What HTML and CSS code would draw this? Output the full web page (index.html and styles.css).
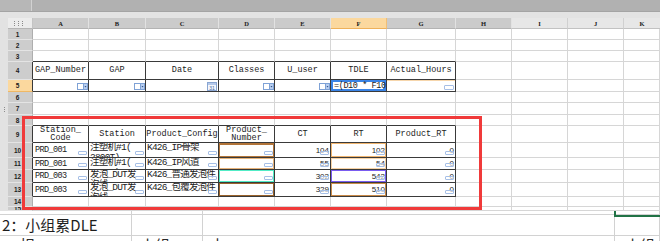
FILE: index.html
```
<!DOCTYPE html>
<html>
<head>
<meta charset="utf-8">
<link rel="stylesheet" href="styles.css">
</head>
<body>
<div class="screen">
  <div class="topbar"><div class="tb-name"></div><div class="tb-formula"></div></div>
  <div class="band"></div>
  <div class="main">
    <div class="strip"><span class="grip"></span></div>
    <div class="sheet">
      <div class="corner"><svg width="9" height="5" viewBox="0 0 9 5"><g fill="#8a8a8a"><rect x="0" y="0" width="1" height="1"/><rect x="0" y="2" width="1" height="1"/><rect x="0" y="4" width="1" height="1"/><rect x="4" y="0" width="1" height="1"/><rect x="4" y="2" width="1" height="1"/><rect x="4" y="4" width="1" height="1"/><rect x="8" y="0" width="1" height="1"/><rect x="8" y="2" width="1" height="1"/><rect x="8" y="4" width="1" height="1"/></g></svg></div>
      <div class="ch">A</div><div class="ch">B</div><div class="ch">C</div><div class="ch">D</div><div class="ch">E</div><div class="ch act">F</div><div class="ch">G</div><div class="ch">H</div><div class="ch u">I</div><div class="ch u">J</div><div class="ch u last">K</div>

      <div class="rh">1</div><div></div><div></div><div></div><div></div><div></div><div></div><div></div><div></div><div></div><div></div><div></div>
      <div class="rh">2</div><div></div><div></div><div></div><div></div><div></div><div></div><div></div><div></div><div></div><div></div><div></div>
      <div class="rh">3</div><div class="tb"></div><div class="tb"></div><div class="tb"></div><div class="tb"></div><div class="tb"></div><div class="tb"></div><div class="tb"></div><div></div><div></div><div></div><div></div>

      <div class="rh tl">4</div>
      <div class="t hd">GAP_Number</div><div class="t hd">GAP</div><div class="t hd">Date</div><div class="t hd">Classes</div><div class="t hd">U_user</div><div class="t hd">TDLE</div><div class="t hd">Actual_Hours</div>
      <div></div><div></div><div></div><div></div>

      <div class="rh act tl">5</div>
      <div class="t"><svg class="dd" width="11" height="7" viewBox="0 0 11 7"><rect x="0.5" y="0.5" width="6" height="6" fill="#fff" stroke="#7fa2d6"/><rect x="6.5" y="0.5" width="4" height="6" fill="#b9cff0" stroke="#7fa2d6"/><path d="M7.5 3h2l-1 1.5z" fill="#34548a"/></svg></div>
      <div class="t"><svg class="dd" width="11" height="7" viewBox="0 0 11 7"><rect x="0.5" y="0.5" width="6" height="6" fill="#fff" stroke="#7fa2d6"/><rect x="6.5" y="0.5" width="4" height="6" fill="#b9cff0" stroke="#7fa2d6"/><path d="M7.5 3h2l-1 1.5z" fill="#34548a"/></svg></div>
      <div class="t"><svg class="cal" width="10" height="9" viewBox="0 0 10 9"><rect x="0.5" y="0.5" width="9" height="8" fill="#f4f7fc" stroke="#8aa6d2"/><rect x="1" y="1" width="8" height="2" fill="#b5c9ea"/><text x="5" y="8" text-anchor="middle" font-family="Liberation Sans" font-size="5" fill="#4a6aa0">31</text></svg></div>
      <div class="t"><svg class="dd" width="11" height="7" viewBox="0 0 11 7"><rect x="0.5" y="0.5" width="6" height="6" fill="#fff" stroke="#7fa2d6"/><rect x="6.5" y="0.5" width="4" height="6" fill="#b9cff0" stroke="#7fa2d6"/><path d="M7.5 3h2l-1 1.5z" fill="#34548a"/></svg></div>
      <div class="t"><svg class="dd" width="11" height="7" viewBox="0 0 11 7"><rect x="0.5" y="0.5" width="6" height="6" fill="#fff" stroke="#7fa2d6"/><rect x="6.5" y="0.5" width="4" height="6" fill="#b9cff0" stroke="#7fa2d6"/><path d="M7.5 3h2l-1 1.5z" fill="#34548a"/></svg></div>
      <div class="t sel"><span class="formula">=(D10 * F10</span><span class="handle"></span></div>
      <div class="t g5"><span class="ic wide"></span></div>
      <div></div><div></div><div></div><div></div>

      <div class="rh">6</div><div></div><div></div><div></div><div></div><div></div><div></div><div></div><div></div><div></div><div></div><div></div>
      <div class="rh">7</div><div></div><div></div><div></div><div></div><div></div><div></div><div></div><div></div><div></div><div></div><div></div>
      <div class="rh">8</div><div class="tb"></div><div class="tb"></div><div class="tb"></div><div class="tb"></div><div class="tb"></div><div class="tb"></div><div class="tb"></div><div></div><div></div><div></div><div></div>

      <div class="rh tl">9</div>
      <div class="t hd">Station_<br>Code</div><div class="t hd">Station</div><div class="t hd">Product_Config</div><div class="t hd">Product_<br>Number</div><div class="t hd">CT</div><div class="t hd">RT</div><div class="t hd">Product_RT</div>
      <div></div><div></div><div></div><div></div>

      <div class="rh tl">10</div>
      <div class="t txt">PRD_001<span class="ic"></span></div>
      <div class="t cjk">注塑机#1(<br>2800T)<span class="ic"></span></div>
      <div class="t cjk">K426_IP骨架<span class="ic"></span></div>
      <div class="t hl h-brown"><span class="ic"></span></div>
      <div class="t num">104<span class="ic"></span></div>
      <div class="t num hl h-orange">102<span class="ic"></span></div>
      <div class="t num">0<span class="ic"></span></div>
      <div></div><div></div><div></div><div></div>

      <div class="rh tl">11</div>
      <div class="t txt">PRD_001<span class="ic"></span></div>
      <div class="t cjk">注塑机#1(<br>2800T)<span class="ic"></span></div>
      <div class="t cjk">K426_IP风道<span class="ic"></span></div>
      <div class="t hl h-tan"><span class="ic"></span></div>
      <div class="t num">55<span class="ic"></span></div>
      <div class="t num hl h-light">54<span class="ic"></span></div>
      <div class="t num">0<span class="ic"></span></div>
      <div></div><div></div><div></div><div></div>

      <div class="rh tl">12</div>
      <div class="t txt">PRD_003<span class="ic"></span></div>
      <div class="t cjk">发泡_DUT发<br>泡线<span class="ic"></span></div>
      <div class="t cjk">K426_普通发泡件<span class="ic"></span></div>
      <div class="t hl h-cyan"><span class="ic"></span></div>
      <div class="t num">302<span class="ic"></span></div>
      <div class="t num hl h-purple">542<span class="ic"></span></div>
      <div class="t num">0<span class="ic"></span></div>
      <div></div><div></div><div></div><div></div>

      <div class="rh tl">13</div>
      <div class="t txt">PRD_003<span class="ic"></span></div>
      <div class="t cjk">发泡_DUT发<br>泡线<span class="ic"></span></div>
      <div class="t cjk">K426_包覆发泡件<span class="ic"></span></div>
      <div class="t hl h-dark"><span class="ic"></span></div>
      <div class="t num">329<span class="ic"></span></div>
      <div class="t num hl h-amber">510<span class="ic"></span></div>
      <div class="t num">0<span class="ic"></span></div>
      <div></div><div></div><div></div><div></div>

      <div class="rh">14</div><div></div><div></div><div></div><div></div><div></div><div></div><div></div><div></div><div></div><div></div><div></div>
      <div class="rh">15</div><div></div><div></div><div></div><div></div><div></div><div></div><div></div><div></div><div></div><div></div><div></div>
    </div>
  </div>
  <div class="lower">
    <div></div><div></div><div></div><div></div>
    <div class="caption">2：小组累DLE</div><div></div><div></div><div></div>
    <div class="part"><span class="p1">揖</span></div><div class="part"><span class="p2">小组</span></div><div class="part"><span class="p3">士</span></div><div class="part"><span class="p4">小组</span></div>
  </div>
  <div class="redbox"></div>
  <div class="greensel"></div>
</div>
</body>
</html>
```
FILE: styles.css
```
html, body {
  margin: 0;
  padding: 0;
}
body {
  width: 660px;
  height: 241px;
  overflow: hidden;
  background: #fff;
  font-family: "Liberation Sans", Arial, sans-serif;
}
.screen {
  position: relative;
  width: 660px;
  height: 241px;
  overflow: hidden;
}
.topbar {
  display: flex;
  height: 11px;
  background: #b1b1b1;
  border-bottom: 1px solid #a4a4a4;
}
.tb-name {
  width: 31px;
  background: #b7b7b7;
  border-right: 1px solid #d2d2d2;
  margin: 0;
}
.tb-formula {
  flex: 1;
}
.band {
  height: 6px;
  background: #e3e3e3;
}
.main {
  display: flex;
  height: 193px;
}
.strip {
  width: 8px;
  background: #e2e2e2;
  display: flex;
  flex-direction: column;
  align-items: center;
  padding-top: 89px;
  box-sizing: border-box;
}
.grip {
  width: 1px;
  height: 6px;
  background: repeating-linear-gradient(#8c8c8c 0 1px, transparent 1px 2px);
}
.sheet {
  display: grid;
  grid-template-columns: 25px 56px 57px 73px 56px 56px 56px 69px 56px 56px 56px 36px;
  grid-template-rows: 11px 11px 11px 11px 18px 12px 11px 12px 11px 17px 15px 12px 13px 14px 10px 4px;
  overflow: hidden;
}
.sheet > div {
  box-sizing: border-box;
  border-right: 1px solid #d6d6d6;
  border-bottom: 1px solid #d6d6d6;
  overflow: hidden;
  position: relative;
  background: #fff;
  min-width: 0;
  min-height: 0;
}
.sheet > .corner {
  background: #ececec;
  border-right: 1px solid #c4c4c4;
  border-bottom: 1px solid #b5b5b5;
  display: flex;
  align-items: center;
  justify-content: center;
  padding-right: 4px;
}
.sheet > .ch {
  background: #cbcbcb;
  border-right: 1px solid #e2e2e2;
  border-bottom: 1px solid #b3b3b3;
  font: bold 6.5px "Liberation Serif", serif;
  color: #202020;
  display: flex;
  align-items: center;
  justify-content: center;
}
.sheet > .ch.act {
  background: #fbd89e;
  border-right-color: #f1bf76;
  border-bottom-color: #eeb15a;
}
.sheet > .ch.u {
  background: #e7e7e7;
  border-right-color: #d0d0d0;
  border-bottom-color: #c2c2c2;
}
.sheet > .ch.last {
  border-right: none;
}
.sheet > .rh {
  background: #cdcdcd;
  border-right: 1px solid #aeaeae;
  border-bottom: 1px solid #e4e4e4;
  font: bold 6.5px "Liberation Sans", sans-serif;
  color: #202020;
  display: flex;
  align-items: center;
  justify-content: center;
  padding-right: 5px;
}
.sheet > .rh.act {
  background: #fbd89e;
  border-bottom-color: #efb865;
}
.sheet > .rh.tl {
  border-right-color: #3a3a3a;
}
.sheet > .tb {
  border-bottom-color: #3a3a3a;
}
.sheet > .t {
  border-right-color: #3a3a3a;
  border-bottom-color: #3a3a3a;
}
.sheet > .hd {
  display: flex;
  align-items: center;
  justify-content: center;
  text-align: center;
  font: 8.5px/8.5px "Liberation Mono", monospace;
  color: #1c1c1c;
  white-space: nowrap;
}
.sheet > .txt {
  display: flex;
  align-items: center;
  padding-left: 2px;
  font: 8.5px "Liberation Mono", monospace;
  letter-spacing: -0.6px;
  color: #1c1c1c;
  white-space: nowrap;
}
.sheet > .cjk {
  padding-left: 1px;
  font: 9.5px/10px "Liberation Mono", "Noto Sans CJK SC", monospace;
  letter-spacing: -0.8px;
  color: #1c1c1c;
  white-space: nowrap;
}
.sheet > .num {
  display: flex;
  align-items: center;
  justify-content: flex-end;
  padding-right: 1px;
  font: 8px "Liberation Sans", sans-serif;
  color: #1c1c1c;
}
.ic {
  position: absolute;
  right: 1px;
  bottom: 2px;
  width: 9px;
  height: 4px;
  box-sizing: border-box;
  border: 1px solid #a6bfe6;
  border-radius: 1px;
  background: rgba(255, 255, 255, 0.6);
}
.ic.wide {
  width: 10px;
  height: 5px;
  right: 1px;
  bottom: 1px;
}
.dd {
  position: absolute;
  right: 0;
  bottom: 1px;
}
.cal {
  position: absolute;
  right: 1px;
  bottom: 0;
}
.sheet > .sel {
  box-shadow: inset 0 0 0 2px #3a84e6;
  display: flex;
  align-items: center;
  padding-left: 3px;
}
.formula {
  font: 8.5px "Liberation Mono", monospace;
  letter-spacing: -0.4px;
  color: #1c1c1c;
  white-space: nowrap;
}
.handle {
  position: absolute;
  right: 0;
  bottom: 0;
  width: 3px;
  height: 3px;
  background: #3a84e6;
}
.sheet > .g5 {
  box-shadow: inset 0 1px 0 #f6d6ac;
}
.sheet > .hl {
  box-shadow: inset 0 0 0 1px var(--hc);
}
.h-brown { --hc: #b2753a; }
.h-tan { --hc: #e6b37a; }
.h-cyan { --hc: #52ecc6; }
.h-dark { --hc: #9a632c; }
.h-orange { --hc: #efb46e; }
.h-light { --hc: #f7d3a6; }
.h-purple { --hc: #7a5cf0; }
.h-amber { --hc: #c98a48; }
.sheet > .h-brown {
  box-shadow: inset 0 2px 0 #b2753a, inset 0 0 0 1px #b2753a;
}

.lower {
  display: grid;
  grid-template-columns: 132px 71px 412px 45px;
  grid-template-rows: 4px 21px 5px;
}
.lower > div {
  box-sizing: border-box;
  border-right: 1px solid #d2d2d2;
  border-bottom: 1px solid #d2d2d2;
  overflow: hidden;
  min-height: 0;
}
.lower > .part {
  border-bottom: none;
  position: relative;
}
.caption {
  display: flex;
  align-items: flex-end;
  padding-left: 2px;
  padding-bottom: 0;
  font: 15px/20px "Noto Sans CJK SC", "Liberation Sans", sans-serif;
  color: #1d1d1d;
  white-space: nowrap;
}
.part span {
  display: block;
  font: 15px/15px "Noto Sans CJK SC", sans-serif;
  color: #2a2a2a;
  margin-top: 1px;
}
.p1 { padding-left: 20px; }
.p2 { padding-left: 8px; }
.p3 { padding-left: 7px; }
.p4 { padding-left: 10px; }

.redbox {
  position: absolute;
  left: 22px;
  top: 116px;
  width: 460px;
  height: 94px;
  box-sizing: border-box;
  border: 3px solid #f03a3a;
}
.greensel {
  position: absolute;
  left: 614px;
  top: 211px;
  width: 46px;
  height: 6px;
  box-sizing: border-box;
  border-left: 2px solid #217346;
  border-bottom: 2px solid #217346;
}
```
